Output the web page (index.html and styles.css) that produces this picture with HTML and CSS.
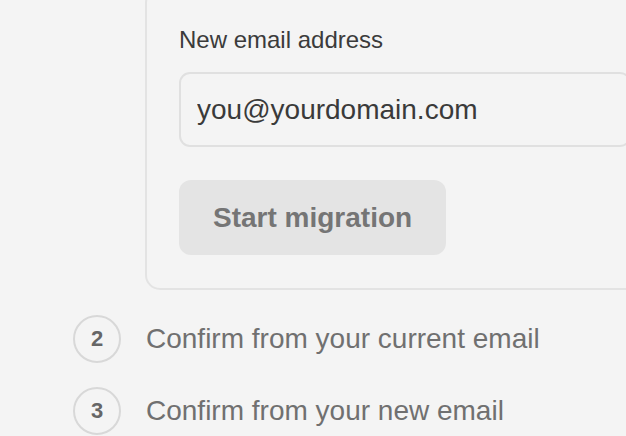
FILE: index.html
```html
<!DOCTYPE html>
<html lang="en">

<head>
	<meta charset="UTF-8">
	<title>Migrate email</title>
	<link rel="stylesheet" href="styles.css">
</head>

<body>
	<ol class="steps">
		<li class="step step_active">
			<div class="step_body">
				<div class="card">
					<label class="field_label" for="new_email">New email address</label>
					<input class="field_input" id="new_email" type="text" placeholder="you@yourdomain.com">
					<button class="primary_button" disabled>Start migration</button>
				</div>
			</div>
		</li>
		<li class="step">
			<span class="step_number">2</span>
			<span class="step_title">Confirm from your current email</span>
		</li>
		<li class="step">
			<span class="step_number">3</span>
			<span class="step_title">Confirm from your new email</span>
		</li>
	</ol>
</body>

</html>
```

FILE: styles.css
```css
* {
	font-family: "Liberation Sans", Arial, sans-serif;
	box-sizing: border-box;
}

body {
	margin: 0;
	background-color: #f4f4f4;
	overflow: hidden;
}

.steps {
	list-style: none;
	margin: 0;
	padding: 0 0 0 73px;
	display: flex;
	flex-direction: column;
	gap: 24px;
	overflow: hidden;
}

.step {
	display: flex;
	align-items: center;
	gap: 25px;
}

.step_active {
	padding-left: 72px;
	margin-bottom: 1px;
}

.step_body {
	flex: 1;
}

.card {
	margin-top: -12px;
	margin-right: -40px;
	padding: 32px 33px 33px 32px;
	border: 2px solid #e3e3e3;
	border-radius: 15px;
	display: flex;
	flex-direction: column;
	align-items: flex-start;
}

.field_label {
	font-size: 24px;
	line-height: 36px;
	color: #3b3b3b;
	margin-bottom: 14px;
}

.field_input {
	width: 100%;
	height: 75px;
	padding: 0 16px;
	border: 2px solid #e0e0e0;
	border-radius: 11px;
	background-color: #f4f4f4;
	font-size: 28px;
	color: #3a3a3a;
	outline: none;
	margin-bottom: 33px;
}

.field_input::placeholder {
	color: #3a3a3a;
	opacity: 1;
}

.primary_button {
	height: 75px;
	padding: 0 34px;
	border: 0;
	border-radius: 12px;
	background-color: #e4e4e4;
	color: #757575;
	font-size: 28px;
	font-weight: bold;
}

.step_number {
	width: 48px;
	height: 48px;
	flex: none;
	border: 2px solid #d8d8d8;
	border-radius: 50%;
	display: flex;
	align-items: center;
	justify-content: center;
	font-size: 22px;
	font-weight: bold;
	color: #666666;
}

.step_title {
	font-size: 28px;
	color: #707070;
}
```
